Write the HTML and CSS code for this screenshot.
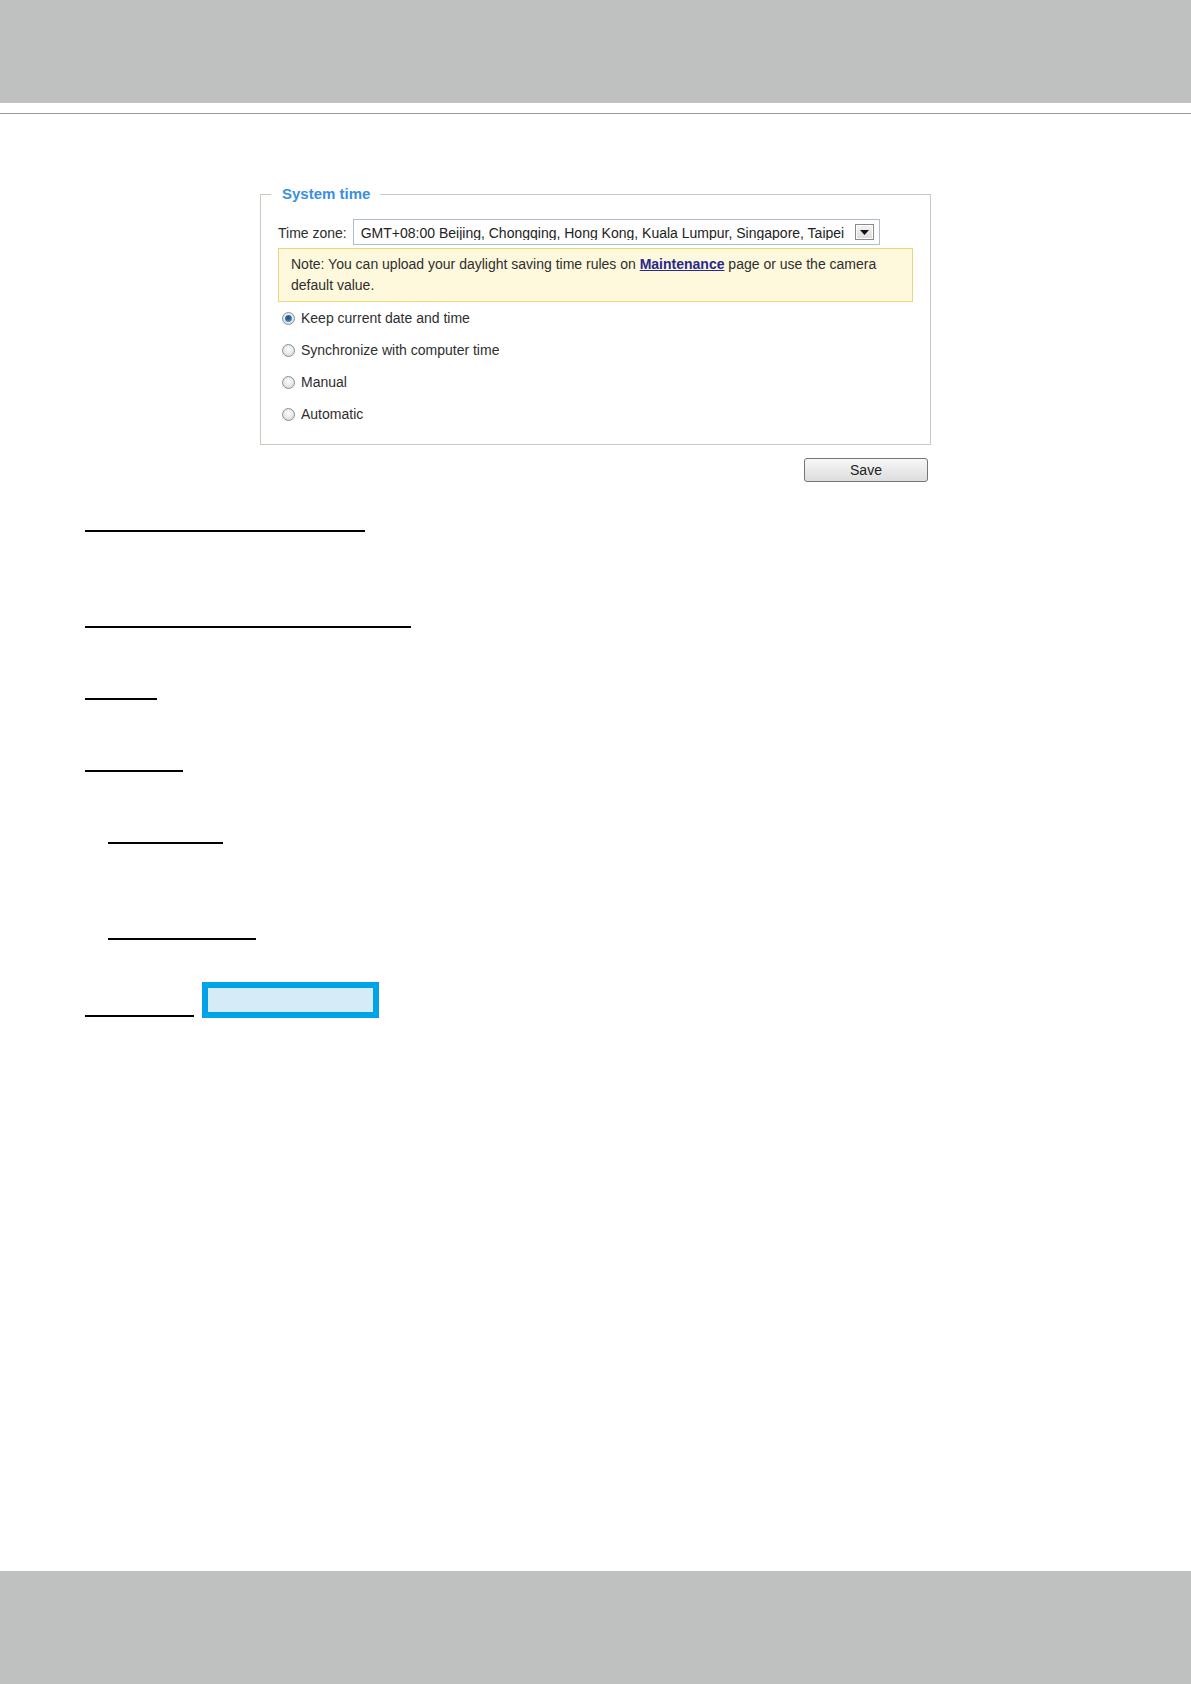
FILE: index.html
```html
<!DOCTYPE html>
<html lang="en">
<head>
<meta charset="utf-8">
<title>System time</title>
<link rel="stylesheet" href="styles.css">
</head>
<body>
<header class="top-band"></header>
<div class="rule"></div>
<main class="page">
  <section class="settings">
    <fieldset class="panel">
      <legend class="panel-title">System time</legend>
      <div class="panel-body">
        <div class="tz-row">
          <span class="tz-label">Time zone:</span>
          <div class="select">
            <span class="select-text">GMT+08:00 Beijing, Chongqing, Hong Kong, Kuala Lumpur, Singapore, Taipei</span>
            <span class="select-btn"><svg width="9" height="5" viewBox="0 0 9 5"><path d="M0 0H9L4.5 5Z" fill="#111"/></svg></span>
          </div>
        </div>
        <div class="note">Note: You can upload your daylight saving time rules on <a class="note-link" href="#">Maintenance</a> page or use the camera default value.</div>
        <ul class="options">
          <li class="option"><span class="radio radio-on"></span>Keep current date and time</li>
          <li class="option"><span class="radio"></span>Synchronize with computer time</li>
          <li class="option"><span class="radio"></span>Manual</li>
          <li class="option"><span class="radio"></span>Automatic</li>
        </ul>
      </div>
    </fieldset>
    <div class="actions"><button class="btn-save" type="button">Save</button></div>
  </section>
  <section class="blanks">
    <div class="blank b1"></div>
    <div class="blank b2"></div>
    <div class="blank b3"></div>
    <div class="blank b4"></div>
    <div class="blank b5"></div>
    <div class="blank b6"></div>
    <div class="blank-row">
      <div class="blank b7"></div>
      <div class="field-box"></div>
    </div>
  </section>
</main>
<footer class="bottom-band"></footer>
</body>
</html>
```
FILE: styles.css
```css
html, body {
  margin: 0;
  padding: 0;
}
body {
  font-family: "Liberation Sans", Arial, sans-serif;
  font-size: 14px;
  color: #2e2e2e;
  background: #fff;
  display: flex;
  flex-direction: column;
  min-height: 1684px;
}
.top-band {
  flex: none;
  height: 103px;
  background: #bfc1c0;
}
.rule {
  flex: none;
  height: 1px;
  margin-top: 10px;
  background: #9a9a9a;
}
.page {
  flex: 1;
}
.settings {
  width: 671px;
  margin-left: 260px;
  padding-top: 71px;
}
.panel {
  margin: 0;
  padding: 0;
  border: 1px solid #cbc9bc;
  min-width: 0;
}
.panel-title {
  margin-left: 10px;
  padding: 0 10px 0 11px;
  font-weight: bold;
  font-size: 15px;
  line-height: 18px;
  color: #3b8fe0;
}
.panel-body {
  padding: 16px 17px 14px;
}
.tz-row {
  display: flex;
  align-items: center;
  gap: 6px;
  height: 26px;
}
.tz-label {
  white-space: nowrap;
  line-height: 16px;
  padding-top: 1px;
}
.select {
  width: 527px;
  height: 26px;
  box-sizing: border-box;
  border: 1px solid #b0bdd0;
  display: flex;
  align-items: center;
  padding: 0 5px 0 7px;
  gap: 4px;
  background: #fff;
}
.select-text {
  flex: 1;
  height: 15px;
  line-height: 17px;
  white-space: nowrap;
  overflow: hidden;
  color: #222;
}
.select-btn {
  flex: none;
  width: 19px;
  height: 16px;
  box-sizing: border-box;
  border: 1px solid #8a8a8a;
  box-shadow: inset 0 0 0 1px #fff;
  background: linear-gradient(#f4f4f4, #dcdcdc);
  display: flex;
  align-items: center;
  justify-content: center;
}
.note {
  margin-top: 3px;
  border: 1px solid #e9d77c;
  background: #fef9dd;
  padding: 5px 12px;
  line-height: 21px;
}
.note-link {
  color: #28288f;
  font-weight: bold;
  text-decoration: underline;
}
.options {
  list-style: none;
  margin: 0;
  padding: 0;
}
.option {
  height: 32px;
  display: flex;
  align-items: center;
  gap: 6px;
  padding-left: 4px;
}
.radio {
  flex: none;
  position: relative;
  width: 13px;
  height: 13px;
  box-sizing: border-box;
  border-radius: 50%;
  border: 1px solid #8e8f8f;
  background: radial-gradient(circle at 50% 40%, #fdfdfd 0, #e4e4e4 60%, #cdcdcd 100%);
}
.radio-on::after {
  content: "";
  position: absolute;
  left: 2px;
  top: 2px;
  width: 7px;
  height: 7px;
  border-radius: 50%;
  background: radial-gradient(circle at 45% 40%, #1d4f86 0, #2c6fb0 45%, #8cc8ef 100%);
}
.actions {
  display: flex;
  justify-content: flex-end;
  padding-right: 3px;
  margin-top: 13px;
}
.btn-save {
  width: 124px;
  height: 24px;
  margin: 0;
  border: 1px solid #767676;
  border-radius: 3px;
  background: linear-gradient(#f7f7f7, #dddddd);
  font-family: "Liberation Sans", Arial, sans-serif;
  font-size: 14px;
  color: #222;
  padding: 0;
}
.blanks {
  padding-left: 85px;
}
.blank {
  height: 2px;
  background: #000;
}
.b1 { width: 280px; margin-top: 48px; }
.b2 { width: 326px; margin-top: 94px; }
.b3 { width: 72px; margin-top: 70px; }
.b4 { width: 98px; margin-top: 70px; }
.b5 { width: 115px; margin-top: 70px; margin-left: 23px; }
.b6 { width: 148px; margin-top: 94px; margin-left: 23px; }
.blank-row {
  display: flex;
  align-items: flex-end;
  gap: 8px;
  margin-top: 42px;
}
.b7 {
  width: 109px;
  margin-bottom: 1px;
}
.field-box {
  width: 177px;
  height: 36px;
  box-sizing: border-box;
  border: 6px solid #00a2e8;
  background: #d5ebf8;
}
.bottom-band {
  flex: none;
  height: 113px;
  background: #bfc1c0;
}
```
